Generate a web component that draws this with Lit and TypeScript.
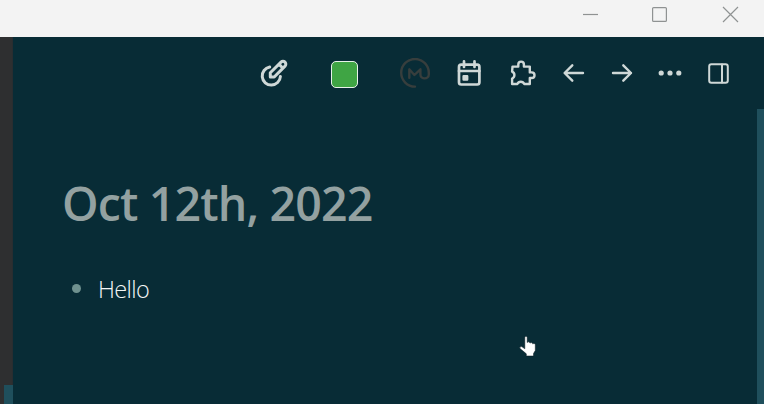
import { LitElement, html, css } from "lit";
import { customElement } from "lit/decorators.js";

@customElement("app-root")
export class AppRoot extends LitElement {
  static styles = css`
    :host {
      display: flex;
      flex-direction: column;
      height: 404px;
      overflow: hidden;
      background: #082c36;
      font-family: "Open Sans", "Noto Sans", sans-serif;
      position: relative;
    }
    svg { display: block; flex: none; fill: none; }
    .titlebar {
      flex: none;
      height: 37px;
      background: #f3f3f3;
      display: flex;
      justify-content: flex-end;
      box-sizing: border-box;
      padding: 4px 23px 0 0;
      gap: 49px;
    }
    .titlebar svg { stroke: #8f9292; stroke-width: 1.2; }
    .titlebar svg:last-child { margin-left: 2px; }
    .body { flex: 1; display: flex; min-height: 0; }
    .rail {
      width: 13px;
      background: #2e2f30;
      border-right: 1px solid #292d30;
      box-sizing: border-box;
      display: flex;
      flex-direction: column;
      justify-content: flex-end;
      padding-left: 4px;
    }
    .rail-thumb { height: 19px; width: 9px; background: #1f4f5c; }
    .main { flex: 1; min-width: 0; }
    .toolbar {
      display: flex;
      justify-content: flex-end;
      height: 60px;
      box-sizing: border-box;
      padding: 21px 24px 0 0;
      gap: 18px;
    }
    .toolbar svg { stroke: #cfd8d7; stroke-linecap: round; stroke-linejoin: round; stroke-width: 2.4; }
    .toolbar .edit { margin-right: 24px; stroke-width: 3; }
    .toolbar .swatch {
      box-sizing: border-box;
      width: 27px;
      height: 27px;
      margin: 3px 24px 0 0;
      border: 1px solid #e8f2ea;
      border-radius: 5px;
      background: #3fa544;
    }
    .toolbar .brand { stroke: #373e3d; margin-right: 6px; }
    .toolbar .calendar { margin-right: 6px; }
    .toolbar .puzzle { margin-right: 3px; }
    .toolbar .dots { fill: #cfd8d7; stroke: none; }
    .page { padding: 73px 0 0 49px; }
    h1 {
      margin: 0;
      font-size: 46.5px;
      line-height: 66px;
      font-weight: 600;
      letter-spacing: -0.85px;
      color: #93a1a1;
      white-space: nowrap;
    }
    .block { display: flex; align-items: center; margin-top: 35px; height: 36px; color: #f4f7f6; font-size: 23.5px; font-weight: 350; letter-spacing: -0.6px; }
    .bullet { width: 9px; height: 9px; border-radius: 50%; background: #6f918f; margin: 0 17px 2px 10px; }
    .scroll { width: 7px; display: flex; align-items: flex-end; }
    .scroll-thumb { width: 7px; height: 295px; background: #1f4f5c; }
    .cursor { position: absolute; left: 518px; top: 334px; }
  `;

  render() {
    return html`
      <div class="titlebar">
        <svg width="20" height="20" viewBox="581 4 20 20"><path d="M583 14.5H598" /></svg>
        <svg width="20" height="20" viewBox="650 4 20 20"><rect x="652.6" y="7.6" width="13.8" height="13.8" rx="1" /></svg>
        <svg width="20" height="20" viewBox="721 4 20 20"><path d="M723 7L738 22M738 7L723 22" /></svg>
      </div>
      <div class="body">
        <div class="rail"><div class="rail-thumb"></div></div>
        <div class="main">
          <div class="toolbar">
            <svg class="edit" width="30" height="30" viewBox="259 58 30 30">
              <path d="M269.7 67A9.1 9.1 0 1 0 280.4 76.5" />
              <path d="M270.3 77V72.8L281 62.1A2.7 2.7 0 0 1 285 66.1L274.2 77ZM279.2 64.4L282.5 67.7" />
            </svg>
            <div class="swatch"></div>
            <svg class="brand" width="30" height="30" viewBox="400 58 30 30">
              <path d="M415 86.6A13.8 13.8 0 1 1 428.8 73V74.5C428.8 79.6 420.4 79.6 420.4 74.5V69.3L414.4 75L409.3 69.3V77.7" />
            </svg>
            <svg class="calendar" width="30" height="30" viewBox="454 58 30 30">
              <rect stroke-width="2.7" x="459" y="64.7" width="20.4" height="19.8" rx="2.2" />
              <path stroke-width="2.7" d="M464 61.4V67M474.5 61.4V67M459 71H479.4" />
              <rect x="463.6" y="76.2" width="3.6" height="3.4" fill="#cfd8d7" />
            </svg>
            <svg class="puzzle" width="30" height="30" viewBox="507.5 58 30 30">
              <path d="M512 66.6H517.8V64.4A2.8 2.8 0 0 1 523.4 64.4V66.6H529.3V72.4H531.2A2.8 2.8 0 0 1 531.2 78H529.3V84H523.8A3.8 3.8 0 0 0 516.8 84H511.6V78.6A3.8 3.8 0 0 0 511.6 71.6Z" />
            </svg>
            <svg width="30" height="30" viewBox="559 58 30 30"><path d="M583 73H565M572.3 65.3L564.6 73L572.3 80.7" /></svg>
            <svg width="30" height="30" viewBox="607 58 30 30"><path d="M613 73H631M623.3 65.3L631 73L623.3 80.7" /></svg>
            <svg class="dots" width="30" height="30" viewBox="655 58 30 30">
              <circle cx="661.2" cy="73" r="2.6" /><circle cx="670" cy="73" r="2.6" /><circle cx="678.8" cy="73" r="2.6" />
            </svg>
            <svg width="30" height="30" viewBox="703 58 30 30">
              <rect stroke-width="2" x="709.2" y="64.2" width="18.6" height="18.6" rx="2.2" /><path stroke-width="2" d="M722 64.5V82.5" />
            </svg>
          </div>
          <div class="page">
            <h1>Oct 12th, 2022</h1>
            <div class="block"><span class="bullet"></span><span>Hello</span></div>
          </div>
        </div>
        <div class="scroll"><div class="scroll-thumb"></div></div>
      </div>
      <svg class="cursor" width="19" height="24" viewBox="518 334 19 24">
        <path fill="#fff" stroke="#06161c" stroke-width=".5" d="M524.8 337Q526 335.4 527.2 337V342.5Q528.7 341 530 343Q531.5 341.8 532.7 343.8Q534.4 342.8 535.3 344.5V350.5L533.5 353.5V356H526.3V353.8L520 348.5Q519 346.3 521.7 346.6L524.8 348.8Z" />
      </svg>
    `;
  }
}
